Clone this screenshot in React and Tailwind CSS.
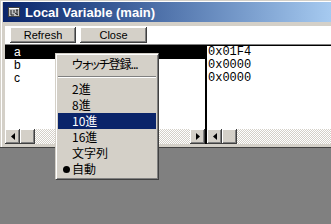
import React from 'react';

const raised = 'bg-[#d4d0c8] shadow-[inset_-1px_-1px_0_#404040,inset_1px_1px_0_#ffffff,inset_-2px_-2px_0_#808080]';
const track = 'bg-[repeating-conic-gradient(#d4d0c8_0_25%,#ffffff_0_50%)] bg-[length:2px_2px]';

const Arrow = ({ dir }) => (
  <div className={`w-[15px] h-[15px] shrink-0 flex items-center justify-center ${raised}`}>
    <svg width="4" height="7" viewBox="0 0 4 7">
      {dir === 'left'
        ? <path d="M4 0 L0 3.5 L4 7 Z" fill="#000" />
        : <path d="M0 0 L4 3.5 L0 7 Z" fill="#000" />}
    </svg>
  </div>
);

const Thumb = () => <div className={`w-[15px] h-[15px] shrink-0 ${raised}`} />;

const TitleIcon = () => (
  <svg width="12" height="10" viewBox="0 0 12 10" className="shrink-0">
    <rect x="0.5" y="0.5" width="11" height="9" fill="#c0c0c0" stroke="#404040" />
    <rect x="1" y="1" width="10" height="1" fill="#ffffff" />
    <path d="M3 3 V8 M3 8 H6 M6 3 V6 M8 3 H10 M9 3 V8 M7 6 L10 8" stroke="#202020" strokeWidth="1" fill="none" />
  </svg>
);

const MenuItem = ({ children, active, bullet, tight }) => (
  <div
    className={`h-[16px] flex items-center relative pl-[14px] ${active ? 'bg-[#0a246a] text-white' : 'text-black'}`}
  >
    {bullet && <span className="absolute left-[5px] top-[5px] w-[7px] h-[7px] rounded-full bg-black" />}
    <span className={`leading-[16px] whitespace-nowrap ${tight ? 'tracking-[-1px]' : ''}`}>{children}</span>
  </div>
);

export default function App() {
  const names = ['a', 'b', 'c'];
  const values = ['0x01F4', '0x0000', '0x0000'];

  return (
    <div className="w-[331px] h-[224px] bg-[#808080] overflow-hidden relative">
      {/* window */}
      <div className="w-[331px] h-[148px] bg-[#d4d0c8] pl-[3px] pt-[2px] flex flex-col shadow-[inset_1px_1px_0_#d4d0c8,inset_2px_2px_0_#ffffff] border-b border-b-[#404040]">
        {/* title bar */}
        <div className="h-[20px] shrink-0 flex items-center bg-gradient-to-r from-[#0a246a] to-[#a6caf0] pl-[5px] gap-[5px]">
          <TitleIcon />
          <span className="text-white font-bold text-[13px] leading-none font-['Liberation_Sans',sans-serif] whitespace-nowrap">
            Local Variable (main)
          </span>
        </div>

        {/* client */}
        <div className="flex-1 pl-[2px] pt-[4px] pb-[3px] flex flex-col">
          <div className="flex-1 bg-white flex flex-col">
            {/* toolbar */}
            <div className="h-[18px] shrink-0 flex items-start gap-[4px] pl-[5px] pt-[1px]">
              <button className={`w-[66px] h-[16px] flex items-center justify-center text-[11px] leading-none text-black font-['Liberation_Sans',sans-serif] ${raised}`}>
                Refresh
              </button>
              <button className={`w-[67px] h-[16px] flex items-center justify-center text-[11px] leading-none text-black font-['Liberation_Sans',sans-serif] ${raised}`}>
                Close
              </button>
            </div>
            <div className="h-[1px] bg-[#808080] shrink-0" />
            <div className="h-[1px] bg-black shrink-0" />

            {/* panes */}
            <div className="flex-1 flex">
              <div className="w-[200px] flex flex-col">
                <div className="flex-1 flex flex-col text-[12px] font-['Liberation_Sans',sans-serif]">
                  {names.map((n, i) => (
                    <div
                      key={n}
                      className={`h-[13px] leading-[13px] pl-[9px] ${i === 0 ? 'bg-black text-white' : 'text-black'}`}
                    >
                      {n}
                    </div>
                  ))}
                </div>
                <div className="h-[15px] flex">
                  <Arrow dir="left" />
                  <Thumb />
                  <div className={`flex-1 ${track}`} />
                  <Arrow dir="right" />
                </div>
              </div>

              <div className="w-[2px] bg-black" />

              <div className="flex-1 flex flex-col">
                <div className="flex-1 flex flex-col text-[12px] font-['Liberation_Mono',monospace] text-black">
                  {values.map((v, i) => (
                    <div key={i} className="h-[13px] leading-[13px] pl-[1px]">
                      {v}
                    </div>
                  ))}
                </div>
                <div className="h-[15px] flex">
                  <Arrow dir="left" />
                  <Thumb />
                  <div className={`flex-1 ${track}`} />
                </div>
              </div>
            </div>
          </div>
        </div>
      </div>

      {/* context menu */}
      <div className="absolute left-[55px] top-[53px] w-[104px] h-[127px] bg-[#d4d0c8] border border-[#d4d0c8] border-r-[#404040] border-b-[#404040] shadow-[inset_1px_1px_0_#ffffff,inset_-1px_-1px_0_#808080] p-[2px] text-[12px] font-['Noto_Sans_CJK_JP',sans-serif] [font-feature-settings:'palt']">
        <MenuItem tight>ウォッチ登録...</MenuItem>
        <div className="h-[9px] pt-[4px]">
          <div className="h-[1px] bg-[#808080]" />
          <div className="h-[1px] bg-white" />
        </div>
        <MenuItem>2進</MenuItem>
        <MenuItem>8進</MenuItem>
        <MenuItem active>10進</MenuItem>
        <MenuItem>16進</MenuItem>
        <MenuItem>文字列</MenuItem>
        <MenuItem bullet>自動</MenuItem>
      </div>
    </div>
  );
}
